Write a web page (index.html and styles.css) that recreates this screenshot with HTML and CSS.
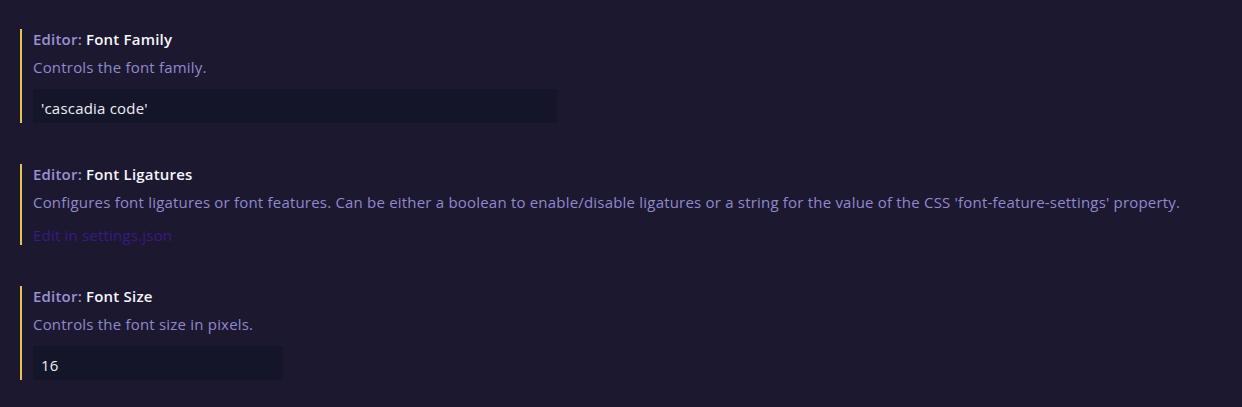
FILE: index.html
```html
<!DOCTYPE html>
<html lang="en">
<head>
<meta charset="utf-8">
<title>Settings</title>
<link rel="stylesheet" href="styles.css">
</head>
<body>
<div class="settings">
  <div class="setting">
    <div class="title"><span class="cat">Editor: </span><span class="name">Font Family</span></div>
    <div class="desc">Controls the font family.</div>
    <div class="input wide">'cascadia code'</div>
  </div>
  <div class="setting short">
    <div class="title"><span class="cat">Editor: </span><span class="name">Font Ligatures</span></div>
    <div class="desc">Configures font ligatures or font features. Can be either a boolean to enable/disable ligatures or a string for the value of the CSS 'font-feature-settings' property.</div>
    <a class="link" href="#">Edit in settings.json</a>
  </div>
  <div class="setting">
    <div class="title"><span class="cat">Editor: </span><span class="name">Font Size</span></div>
    <div class="desc">Controls the font size in pixels.</div>
    <div class="input narrow">16</div>
  </div>
</div>
</body>
</html>
```

FILE: styles.css
```css
html, body {
  margin: 0;
  padding: 0;
  background: #1b1830;
  height: 100%;
}
body {
  font-family: "Open Sans", "Noto Sans", sans-serif;
  font-size: 15px;
  letter-spacing: 0.2px;
  line-height: 20px;
}
.settings {
  display: flex;
  flex-direction: column;
  gap: 41px;
  padding: 29px 0 0 20px;
}
.setting {
  border-left: 2px solid #e6c44c;
  padding: 0 0 0 11px;
  display: flex;
  flex-direction: column;
  align-items: flex-start;
  height: 94px;
  box-sizing: border-box;
}
.setting.short {
  height: 81px;
}
.title {
  font-weight: 600;
}
.cat {
  color: #9b90d2;
}
.name {
  color: #f6f5fc;
}
.desc {
  margin-top: 8px;
  color: #9189cc;
  white-space: nowrap;
}
.input {
  margin-top: 12px;
  box-sizing: border-box;
  height: 34px;
  padding: 9px 8px 5px 8px;
  background: #15152a;
  color: #eeeef5;
}
.wide { width: 524px; }
.narrow { width: 250px; }
.link {
  margin-top: 13px;
  color: #3a1a84;
  text-decoration: none;
}
```
